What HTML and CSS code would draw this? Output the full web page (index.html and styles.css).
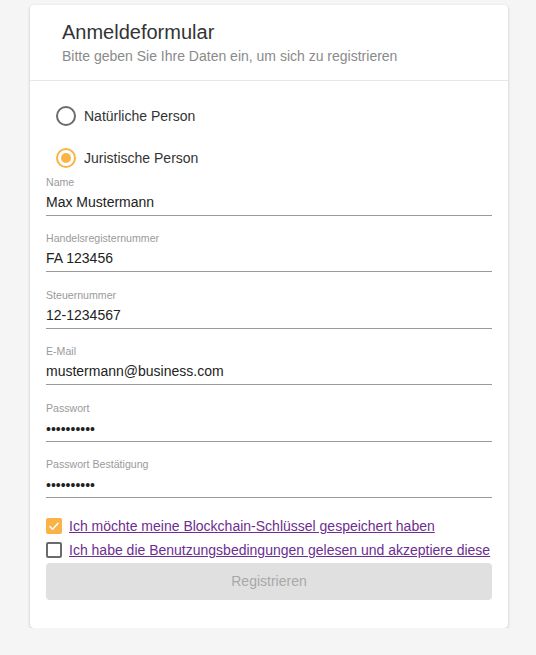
FILE: index.html
```html
<!DOCTYPE html>
<html lang="de">
<head>
<meta charset="utf-8">
<link rel="stylesheet" href="styles.css">
</head>
<body>
<div class="card">
  <div class="card-header">
    <div class="title">Anmeldeformular</div>
    <div class="subtitle">Bitte geben Sie Ihre Daten ein, um sich zu registrieren</div>
  </div>
  <div class="card-body">
    <div class="radios">
      <div class="radio-row"><span class="radio"></span><span class="radio-label">Natürliche Person</span></div>
      <div class="radio-row"><span class="radio checked"><span class="dot"></span></span><span class="radio-label">Juristische Person</span></div>
    </div>
    <div class="field"><div class="label">Name</div><div class="value">Max Mustermann</div></div>
    <div class="field"><div class="label">Handelsregisternummer</div><div class="value">FA 123456</div></div>
    <div class="field"><div class="label">Steuernummer</div><div class="value">12-1234567</div></div>
    <div class="field"><div class="label">E-Mail</div><div class="value">mustermann@business.com</div></div>
    <div class="field"><div class="label">Passwort</div><div class="value pw">••••••••••</div></div>
    <div class="field"><div class="label">Passwort Bestätigung</div><div class="value pw">••••••••••</div></div>
    <div class="checks">
      <div class="check-row"><span class="box checked"><svg viewBox="0 0 16 16" width="16" height="16"><path d="M3.5 8.2 L6.6 11.2 L12.5 4.8" fill="none" stroke="#fff" stroke-width="1.6"/></svg></span><a class="link" href="#">Ich möchte meine Blockchain-Schlüssel gespeichert haben</a></div>
      <div class="check-row"><span class="box"></span><a class="link" href="#">Ich habe die Benutzungsbedingungen gelesen und akzeptiere diese</a></div>
    </div>
    <div class="button">Registrieren</div>
  </div>
</div>
</body>
</html>
```
FILE: styles.css
```css
html, body {
  margin: 0;
  padding: 0;
  background: #f5f5f6;
  font-family: "Liberation Sans", Arial, sans-serif;
}
.card {
  margin: 5px 0 0 30px;
  width: 478px;
  background: #fff;
  border-radius: 4px;
  box-shadow: 0 1px 3px rgba(0,0,0,0.22);
}
.card-header {
  padding: 15px 32px 0 32px;
  height: 60px;
  border-bottom: 1px solid #e6e6e6;
}
.title {
  font-size: 20px;
  line-height: 24px;
  color: #333;
}
.subtitle {
  margin-top: 3px;
  font-size: 14px;
  line-height: 18px;
  color: #8a8a8a;
}
.card-body {
  padding: 18px 16px 28px 16px;
}
.radios {
  padding-left: 10px;
  display: flex;
  flex-direction: column;
  gap: 8px;
}
.radio-row {
  display: flex;
  align-items: center;
  height: 34px;
}
.radio {
  box-sizing: border-box;
  width: 20px;
  height: 20px;
  border: 2px solid #6b6b6b;
  border-radius: 50%;
  display: flex;
  align-items: center;
  justify-content: center;
}
.radio.checked {
  border-color: #fbb347;
}
.dot {
  width: 10px;
  height: 10px;
  border-radius: 50%;
  background: #fbb347;
}
.radio-label {
  margin-left: 8px;
  font-size: 14px;
  color: #333;
}
.field {
  margin-top: 15.4px;
  border-bottom: 1px solid #9a9a9a;
}
.radios + .field {
  margin-top: 0;
}
.label {
  font-size: 10.6px;
  line-height: 14px;
  color: #9a9a9a;
}
.value {
  font-size: 14px;
  line-height: 26px;
  height: 26px;
  color: #222;
}
.value.pw {
  font-size: 14px;
  line-height: 28px;
}
.checks {
  margin-top: 16px;
}
.check-row {
  display: flex;
  align-items: center;
  height: 24px;
}
.box {
  box-sizing: border-box;
  width: 16px;
  height: 16px;
  border: 2px solid #6b6b6b;
  border-radius: 2px;
  display: flex;
}
.box.checked {
  border: none;
  background: #fbb347;
}
.link {
  margin-left: 7px;
  font-size: 14px;
  color: #6d2d91;
  text-decoration: underline;
}
.button {
  margin-top: 1px;
  height: 37px;
  line-height: 37px;
  background: #e0e0e0;
  border-radius: 4px;
  text-align: center;
  font-size: 14px;
  color: #a8a8a8;
}
```
